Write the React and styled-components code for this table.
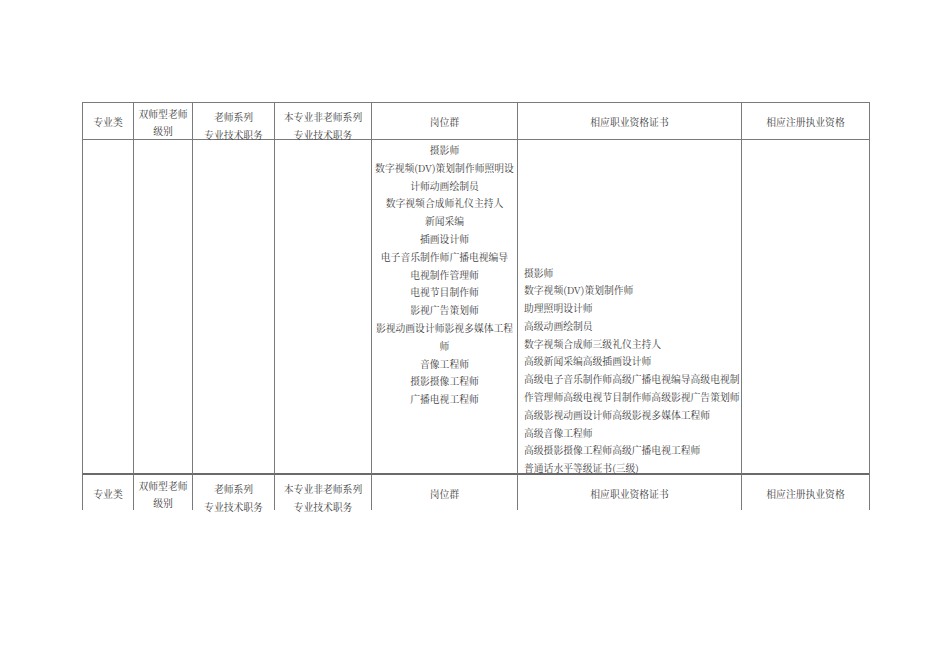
import React from "react";
import styled, { createGlobalStyle } from "styled-components";

const Global = createGlobalStyle`
  html, body { margin: 0; padding: 0; background: #ffffff; }
  body {
    font-family: "Noto Serif CJK SC", "Noto Sans CJK SC", "Liberation Serif", serif;
    color: #404040;
  }
`;

const Page = styled.div`
  width: 950px;
  height: 672px;
  box-sizing: border-box;
  padding: 102px 0 0 82px;
  background: #fff;
  overflow: hidden;
`;

const Table = styled.div`
  display: grid;
  grid-template-columns: 51px 59px 82px 97px 146px 224px 128px;
  width: 788px;
  box-sizing: border-box;
  border-top: 1px solid #7a7a7a;
  border-right: 1px solid #7a7a7a;
  font-size: 9.8px;
  line-height: 17.8px;
`;

const Cell = styled.div`
  box-sizing: border-box;
  border-left: 1px solid #7a7a7a;
  border-bottom: ${(p) =>
    p.$bottom === "thick" ? "2px solid #6a6a6a" : p.$bottom === "none" ? "none" : "1px solid #7a7a7a"};
  height: ${(p) => p.$h}px;
  padding-top: ${(p) => p.$pt || 0}px;
  padding-left: ${(p) => p.$pl || 0}px;
  text-align: ${(p) => p.$align || "center"};
  white-space: nowrap;
  overflow: visible;
`;

const Line = styled.div`
  height: 17.8px;
  line-height: 17.8px;
`;

const header = [
  { lines: ["专业类"], pt: 10.5 },
  { lines: ["双师型老师", "级别"], pt: 2.5 },
  { lines: ["老师系列", "专业技术职务"], pt: 6 },
  { lines: ["本专业非老师系列", "专业技术职务"], pt: 6 },
  { lines: ["岗位群"], pt: 10.5 },
  { lines: ["相应职业资格证书"], pt: 10.5 },
  { lines: ["相应注册执业资格"], pt: 10.5 },
];

const posts = [
  "摄影师",
  "数字视频(DV)策划制作师照明设",
  "计师动画绘制员",
  "数字视频合成师礼仪主持人",
  "新闻采编",
  "插画设计师",
  "电子音乐制作师广播电视编导",
  "电视制作管理师",
  "电视节目制作师",
  "影视广告策划师",
  "影视动画设计师影视多媒体工程",
  "师",
  "音像工程师",
  "摄影摄像工程师",
  "广播电视工程师",
];

const certs = [
  "摄影师",
  "数字视频(DV)策划制作师",
  "助理照明设计师",
  "高级动画绘制员",
  "数字视频合成师三级礼仪主持人",
  "高级新闻采编高级插画设计师",
  "高级电子音乐制作师高级广播电视编导高级电视制",
  "作管理师高级电视节目制作师高级影视广告策划师",
  "高级影视动画设计师高级影视多媒体工程师",
  "高级音像工程师",
  "高级摄影摄像工程师高级广播电视工程师",
  "普通话水平等级证书(三级)",
];

function HeaderRow({ h, bottom }) {
  return header.map((c, i) => (
    <Cell key={i} $h={h} $pt={c.pt} $bottom={bottom}>
      {c.lines.map((l, j) => (
        <Line key={j}>{l}</Line>
      ))}
    </Cell>
  ));
}

export default function App() {
  return (
    <>
      <Global />
      <Page>
        <Table>
          <HeaderRow h={37} />
          <Cell $h={335} $bottom="thick" />
          <Cell $h={335} $bottom="thick" />
          <Cell $h={335} $bottom="thick" />
          <Cell $h={335} $bottom="thick" />
          <Cell $h={335} $bottom="thick" $pt={2}>
            {posts.map((l, i) => (
              <Line key={i}>{l}</Line>
            ))}
          </Cell>
          <Cell $h={335} $bottom="thick" $pt={124.5} $pl={6} $align="left">
            {certs.map((l, i) => (
              <Line key={i}>{l}</Line>
            ))}
          </Cell>
          <Cell $h={335} $bottom="thick" />
          <HeaderRow h={35} bottom="none" />
        </Table>
      </Page>
    </>
  );
}
